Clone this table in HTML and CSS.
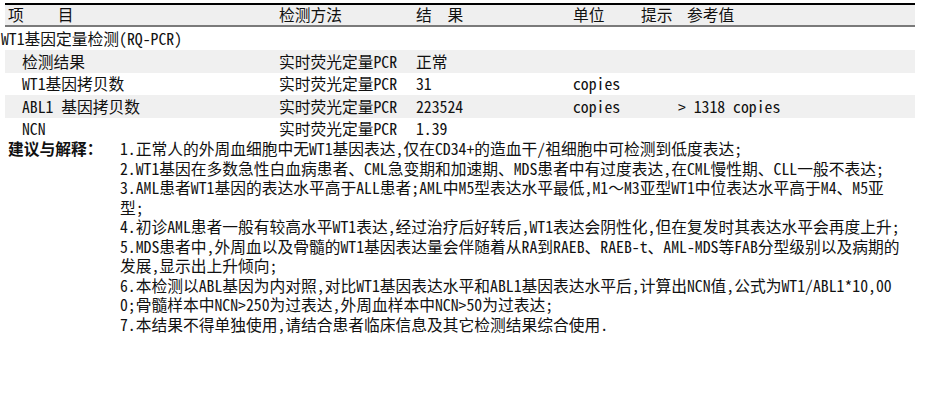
FILE: index.html
```html
<!DOCTYPE html>
<html lang="zh-CN">
<head>
<meta charset="utf-8">
<title>WT1基因定量检测</title>
<link rel="stylesheet" href="styles.css">
</head>
<body>
<div class="report">
  <div class="results">
    <div class="row head">
      <div class="c1 item-h"><span>项</span><span>目</span></div>
      <div>检测方法</div>
      <div>结&nbsp;&nbsp;果</div>
      <div>单位</div>
      <div>提示</div>
      <div class="ref-h">参考值</div>
    </div>
    <div class="group">WT1基因定量检测(RQ-PCR)</div>
    <div class="row shade r1">
      <div class="c1">检测结果</div>
      <div>实时荧光定量PCR</div>
      <div>正常</div>
      <div></div>
      <div></div>
      <div></div>
    </div>
    <div class="row r2">
      <div class="c1">WT1基因拷贝数</div>
      <div>实时荧光定量PCR</div>
      <div>31</div>
      <div>copies</div>
      <div></div>
      <div></div>
    </div>
    <div class="row shade r3">
      <div class="c1">ABL1 基因拷贝数</div>
      <div>实时荧光定量PCR</div>
      <div>223524</div>
      <div>copies</div>
      <div></div>
      <div>&gt; 1318 copies</div>
    </div>
    <div class="row r4">
      <div class="c1">NCN</div>
      <div>实时荧光定量PCR</div>
      <div>1.39</div>
      <div></div>
      <div></div>
      <div></div>
    </div>
  </div>
  <div class="advice">
    <div class="advice-label">建议与解释：</div>
    <div class="advice-text">
      <p>1.正常人的外周血细胞中无WT1基因表达,仅在CD34+的造血干/祖细胞中可检测到低度表达;</p>
      <p>2.WT1基因在多数急性白血病患者、CML急变期和加速期、MDS患者中有过度表达,在CML慢性期、CLL一般不表达;</p>
      <p>3.AML患者WT1基因的表达水平高于ALL患者;AML中M5型表达水平最低,M1～M3亚型WT1中位表达水平高于M4、M5亚</p>
      <p>型;</p>
      <p>4.初诊AML患者一般有较高水平WT1表达,经过治疗后好转后,WT1表达会阴性化,但在复发时其表达水平会再度上升;</p>
      <p>5.MDS患者中,外周血以及骨髓的WT1基因表达量会伴随着从RA到RAEB、RAEB-t、AML-MDS等FAB分型级别以及病期的</p>
      <p>发展,显示出上升倾向;</p>
      <p>6.本检测以ABL基因为内对照,对比WT1基因表达水平和ABL1基因表达水平后,计算出NCN值,公式为WT1/ABL1*10,00</p>
      <p>0;骨髓样本中NCN&gt;250为过表达,外周血样本中NCN&gt;50为过表达;</p>
      <p>7.本结果不得单独使用,请结合患者临床信息及其它检测结果综合使用.</p>
    </div>
  </div>
</div>
</body>
</html>
```

FILE: styles.css
```css
html, body {
  margin: 0;
  padding: 0;
  background: #ffffff;
}

body {
  font-family: "Noto Sans Mono CJK SC", "Noto Sans CJK SC", monospace;
  font-size: 15.75px;
  color: #111111;
}

.report {
  width: 928px;
}

.results {
  display: flex;
  flex-direction: column;
  padding-top: 3px;
}

.row {
  display: grid;
  grid-template-columns: 274px 137px 157px 68px 37px 1fr;
  margin-left: 5px;
  width: 910px;
  height: 23px;
  line-height: 23px;
  white-space: nowrap;
}

.row .c1 {
  padding-left: 17px;
}

.head {
  border-top: 2px solid #000000;
  border-bottom: 2px solid #7a7a7a;
  background: #efefef;
  height: 20px;
  line-height: 20px;
}

.head .item-h {
  padding-left: 3px;
  display: flex;
  gap: 34px;
}

.head .ref-h {
  padding-left: 9px;
}

.group {
  height: 23px;
  line-height: 23px;
  padding-left: 1px;
  white-space: nowrap;
}

.shade {
  background: #f0f0f0;
}

.r2 {
  height: 22px;
  line-height: 22px;
}

.r4 {
  height: 21px;
  line-height: 21px;
}

.advice {
  display: grid;
  grid-template-columns: 120px 1fr;
  line-height: 19.5px;
}

.advice-label {
  padding-left: 8px;
  font-family: "Noto Sans CJK SC", sans-serif;
  font-weight: 700;
  white-space: nowrap;
}

.advice-text p {
  margin: 0;
  white-space: nowrap;
}
```
